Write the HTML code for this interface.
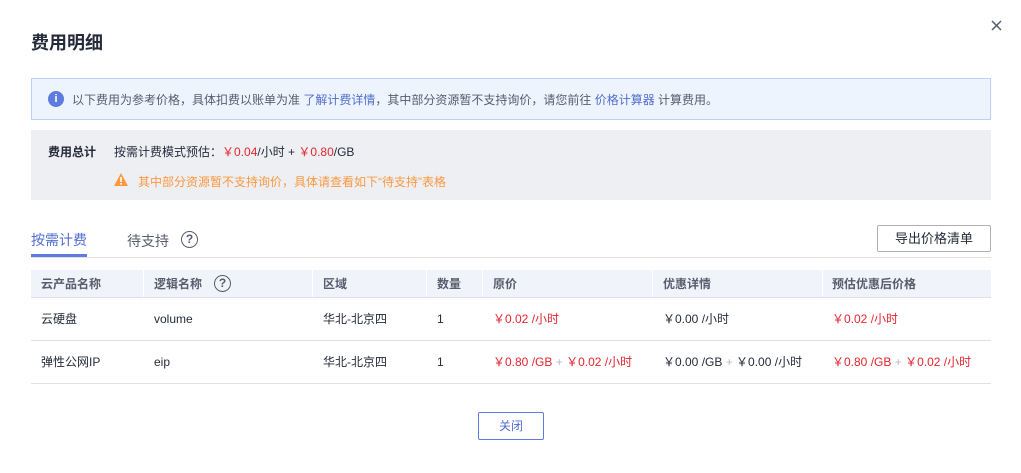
<!DOCTYPE html><html><head><meta charset="utf-8"><style>
*{margin:0;padding:0;box-sizing:border-box}
body{width:1021px;height:473px;background:#fff;font-family:"Liberation Sans","Noto Sans CJK SC",sans-serif;font-size:12px;color:#252b3a;position:relative;overflow:hidden}
.a{position:absolute;white-space:nowrap}
.r{color:#e4252e}
.g{color:#b8bcc6}
.hd{background:#f0f3fa;color:#575d6c;font-weight:bold}
.c{position:absolute;top:0;height:100%;display:flex;align-items:center;line-height:14px}
.q{display:inline-block;width:17px;height:17px;border:1.5px solid #575d6c;border-radius:50%;text-align:center;line-height:14px;font-size:12px;font-weight:bold;color:#575d6c}
</style></head><body>
<div class="a" style="left:31px;top:29px;font-size:18px;font-weight:bold;color:#252b3a">费用明细</div>
<svg class="a" style="left:991px;top:20px" width="11" height="11" viewBox="0 0 11 11"><path d="M1 1L10 10M10 1L1 10" stroke="#575d6c" stroke-width="1.5"/></svg>
<div class="a" style="left:31px;top:78px;width:960px;height:42px;background:#edf4fe;border:1px solid #b9d3f7"></div>
<div class="a" style="left:48px;top:91px;width:16px;height:16px;border-radius:50%;background:#5e7ce0;color:#fff;font-weight:bold;font-size:11px;text-align:center;line-height:16px">i</div>
<div class="a" style="left:72px;top:91px;color:#575d6c">以下费用为参考价格，具体扣费以账单为准 <span style="color:#526ecc">了解计费详情</span>，其中部分资源暂不支持询价，请您前往 <span style="color:#526ecc">价格计算器</span> 计算费用。</div>
<div class="a" style="left:31px;top:130px;width:960px;height:70px;background:#eeeff3"></div>
<div class="a" style="left:48px;top:143px;font-weight:bold">费用总计</div>
<div class="a" style="left:114px;top:143px">按需计费模式预估：<span class="r">￥0.04</span>/小时 + <span class="r">￥0.80</span>/GB</div>
<svg class="a" style="left:113px;top:172px" width="16" height="15" viewBox="0 0 16 15"><path d="M8 1L15 14H1Z" fill="#fa9841"/><rect x="7.2" y="5" width="1.6" height="5" fill="#fff"/><rect x="7.2" y="11" width="1.6" height="1.6" fill="#fff"/></svg>
<div class="a" style="left:138px;top:173px;color:#fa9841">其中部分资源暂不支持询价，具体请查看如下“待支持”表格</div>
<div class="a" style="left:31px;top:230px;font-size:14px;color:#526ecc">按需计费</div>
<div class="a" style="left:31px;top:254px;width:56px;height:3px;background:#5e7ce0"></div>
<div class="a" style="left:127px;top:231px;font-size:14px;color:#575d6c">待支持</div>
<div class="a" style="left:181px;top:231px"><span class="q">?</span></div>
<div class="a" style="left:31px;top:257px;width:960px;height:1px;background:#dfe1e6"></div>
<div class="a" style="left:877px;top:225px;width:114px;height:27px;border:1px solid #adb0b8;border-radius:2px;text-align:center;line-height:25px;font-size:13px">导出价格清单</div>
<div class="a hd" style="left:31px;top:270px;width:960px;height:28px;border-bottom:1px solid #dfe1e6">
<div class="c" style="left:10px">云产品名称</div>
<div class="c" style="left:112px;width:1px;background:#fff;height:100%"></div>
<div class="c" style="left:123px">逻辑名称 <span class="q" style="margin-left:12px">?</span></div>
<div class="c" style="left:281px;width:1px;background:#fff"></div>
<div class="c" style="left:292px">区域</div>
<div class="c" style="left:395px;width:1px;background:#fff"></div>
<div class="c" style="left:406px">数量</div>
<div class="c" style="left:451px;width:1px;background:#fff"></div>
<div class="c" style="left:462px">原价</div>
<div class="c" style="left:621px;width:1px;background:#fff"></div>
<div class="c" style="left:632px">优惠详情</div>
<div class="c" style="left:791px;width:1px;background:#fff"></div>
<div class="c" style="left:801px">预估优惠后价格</div>
</div>
<div class="a" style="left:31px;top:298px;width:960px;height:43px;border-bottom:1px solid #dfe1e6">
<div class="c" style="left:10px">云硬盘</div><div class="c" style="left:123px">volume</div><div class="c" style="left:292px">华北-北京四</div><div class="c" style="left:406px">1</div>
<div class="c r" style="left:462px">￥0.02 /小时</div><div class="c" style="left:632px">￥0.00 /小时</div><div class="c r" style="left:801px">￥0.02 /小时</div></div>
<div class="a" style="left:31px;top:341px;width:960px;height:43px;border-bottom:1px solid #dfe1e6">
<div class="c" style="left:10px">弹性公网IP</div><div class="c" style="left:123px">eip</div><div class="c" style="left:292px">华北-北京四</div><div class="c" style="left:406px">1</div>
<div class="c" style="left:462px"><span class="r">￥0.80 /GB</span>&nbsp;<span class="g">+</span>&nbsp;<span class="r">￥0.02 /小时</span></div>
<div class="c" style="left:632px">￥0.00 /GB&nbsp;<span class="g">+</span>&nbsp;￥0.00 /小时</div>
<div class="c" style="left:801px"><span class="r">￥0.80 /GB</span>&nbsp;<span class="g">+</span>&nbsp;<span class="r">￥0.02 /小时</span></div></div>
<div class="a" style="left:478px;top:412px;width:66px;height:28px;border:1px solid #5e7ce0;border-radius:2px;color:#526ecc;text-align:center;line-height:26px">关闭</div>
</body></html>
